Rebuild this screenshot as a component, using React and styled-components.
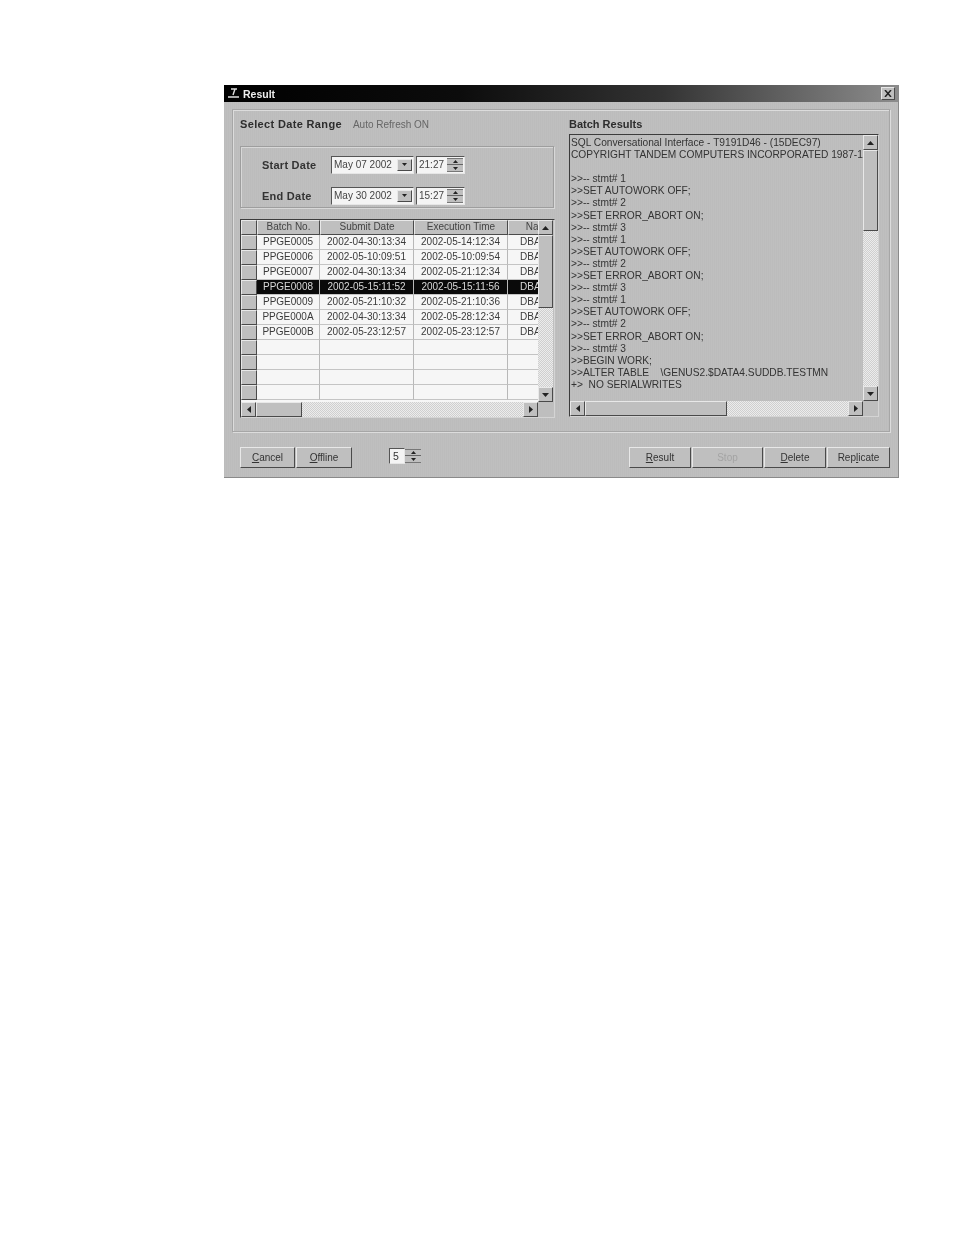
import React from "react";
import styled, { createGlobalStyle, css } from "styled-components";

const Global = createGlobalStyle`
  html, body { margin: 0; padding: 0; background: #fff; }
  body { font-family: "Liberation Sans", Arial, sans-serif; }
`;

const raised = css`
  background: #bfbfbf;
  border: 1px solid;
  border-color: #e8e8e8 #4a4a4a #4a4a4a #e8e8e8;
  box-sizing: border-box;
`;

const sunken = css`
  border: 1px solid;
  border-color: #555 #e6e6e6 #e6e6e6 #555;
  box-sizing: border-box;
`;

const Page = styled.div`
  width: 954px;
  height: 1235px;
  padding: 85px 0 0 224px;
  box-sizing: border-box;
  overflow: hidden;
`;

const Window = styled.div`
  width: 675px;
  height: 393px;
  background: repeating-linear-gradient(90deg, #bcbcbc 0 1px, #bfbfbf 1px 2px);
  border-right: 1px solid #8a8a8a;
  border-bottom: 1px solid #8a8a8a;
  box-sizing: border-box;
  display: flex;
  flex-direction: column;
  filter: blur(0.6px);
  color: #333;
`;

const TitleBar = styled.div`
  height: 17px;
  flex: none;
  background: linear-gradient(90deg, #000 0%, #0c0c0c 35%, #333 65%, #666 85%, #8c8c8c 100%);
  display: flex;
  align-items: center;
  padding: 0 3px 0 2px;
  gap: 1px;
  color: #eee;
  font-weight: 700;
  font-size: 10.5px;
`;

const TitleText = styled.span`
  flex: 1;
`;

const CloseBox = styled.div`
  ${raised}
  width: 14px;
  height: 13px;
  display: flex;
  align-items: center;
  justify-content: center;
`;

const Frame = styled.div`
  margin: 7px 8px 0 8px;
  height: 323px;
  flex: none;
  border: 1px solid #a6a6a6;
  box-shadow: inset 1px 1px 0 #dcdcdc, 1px 1px 0 #dcdcdc;
  box-sizing: border-box;
  padding: 0 11px 0 7px;
  display: grid;
  grid-template-columns: 315px 310px;
  column-gap: 14px;
`;

const Column = styled.div`
  display: flex;
  flex-direction: column;
  min-width: 0;
`;

const HeadRow = styled.div`
  height: 24px;
  flex: none;
  display: flex;
  align-items: flex-end;
  gap: 11px;
  padding-bottom: 3px;
  box-sizing: border-box;
`;

const Heading = styled.span`
  font-weight: 700;
  font-size: 11px;
  letter-spacing: ${(p) => p.$track || 0}px;
  line-height: 13px;
  color: #2d2d2d;
`;

const Note = styled.span`
  font-size: 10px;
  line-height: 13px;
  color: #666;
`;

const DateGroup = styled.div`
  margin-top: 12px;
  width: 314px;
  height: 62px;
  flex: none;
  border: 1px solid #9e9e9e;
  box-shadow: inset 1px 1px 0 #d8d8d8, 1px 1px 0 #d8d8d8;
  box-sizing: border-box;
  padding: 7px 0 0 21px;
  display: flex;
  flex-direction: column;
  gap: 10px;
`;

const DateRow = styled.div`
  display: flex;
  align-items: center;
  height: 21px;
`;

const DateLabel = styled.span`
  width: 69px;
  font-weight: 700;
  font-size: 11px;
  letter-spacing: 0.25px;
  color: #333;
`;

const Field = styled.div`
  ${sunken}
  background: #f4f4f4;
  height: 18px;
  width: ${(p) => p.$w}px;
  margin-right: 2px;
  display: flex;
  align-items: center;
  font-size: 10px;
  color: #444;
  padding-left: 2px;
  position: relative;
`;

const FieldText = styled.span`
  flex: 1;
  white-space: nowrap;
`;

const DropBtn = styled.div`
  ${raised}
  width: 15px;
  height: 12px;
  margin-right: 1px;
  display: flex;
  align-items: center;
  justify-content: center;
`;

const SpinStack = styled.div`
  width: 16px;
  height: 14px;
  margin-right: 1px;
  display: flex;
  flex-direction: column;
  justify-content: space-between;
  align-items: center;
  padding: 1px 0;
  background: #bfbfbf;
  border-top: 1px solid #777;
  border-bottom: 1px solid #777;
  box-sizing: border-box;
  position: relative;
  &::after {
    content: "";
    position: absolute;
    left: 0;
    right: 0;
    top: 5px;
    height: 1px;
    background: #666;
  }
`;

const Arrow = styled.svg`
  display: block;
  fill: #222;
`;

const Up = ({ w = 7, h = 4 }) => (
  <Arrow width={w} height={h} viewBox="0 0 7 4" preserveAspectRatio="none"><path d="M3.5 0 7 4H0z" /></Arrow>
);
const Down = ({ w = 7, h = 4 }) => (
  <Arrow width={w} height={h} viewBox="0 0 7 4" preserveAspectRatio="none"><path d="M0 0h7L3.5 4z" /></Arrow>
);
const Left = () => (
  <Arrow width="4" height="7" viewBox="0 0 4 7"><path d="M4 0v7L0 3.5z" /></Arrow>
);
const Right = () => (
  <Arrow width="4" height="7" viewBox="0 0 4 7"><path d="M0 0l4 3.5L0 7z" /></Arrow>
);

const TableBox = styled.div`
  ${sunken}
  border-color: #3c3c3c #d4d4d4 #d4d4d4 #3c3c3c;
  margin-top: 11px;
  width: 315px;
  height: 199px;
  flex: none;
  display: grid;
  grid-template-columns: 297px 15px;
  grid-template-rows: 182px 15px;
  overflow: hidden;
`;

const TextBox = styled(TableBox)`
  margin-top: 0;
  width: 310px;
  height: 283px;
  grid-template-columns: 293px 15px;
  grid-template-rows: 266px 15px;
`;

const Grid = styled.div`
  overflow: hidden;
  background: #f6f6f6;
`;

const Row = styled.div`
  display: grid;
  grid-template-columns: 16px 63px 94px 94px 62px;
  height: 15px;
`;

const HeadCell = styled.div`
  ${raised}
  font-size: 10px;
  line-height: 12px;
  text-align: center;
  color: #444;
  white-space: nowrap;
  overflow: hidden;
`;

const Cell = styled.div`
  font-size: 10px;
  line-height: 14px;
  text-align: ${(p) => (p.$left ? "left" : "center")};
  padding-left: ${(p) => (p.$left ? "12px" : "0")};
  white-space: nowrap;
  overflow: hidden;
  box-sizing: border-box;
  border-right: 1px solid #b8b8b8;
  border-bottom: 1px solid #c4c4c4;
  background: ${(p) => (p.$sel ? "#0a0a0a" : "#f6f6f6")};
  color: ${(p) => (p.$sel ? "#d8d8d8" : "#3a3a3a")};
`;

const dither = css`
  background-color: #dcdcdc;
  background-image: repeating-conic-gradient(#cfcfcf 0 25%, #ececec 0 50%);
  background-size: 2px 2px;
`;

const VBar = styled.div`
  ${dither}
  display: flex;
  flex-direction: column;
  height: 100%;
`;

const HBar = styled.div`
  ${dither}
  display: flex;
  width: 100%;
`;

const SBtn = styled.div`
  ${raised}
  width: 15px;
  height: 15px;
  flex: none;
  display: flex;
  align-items: center;
  justify-content: center;
`;

const Thumb = styled.div`
  ${raised}
  flex: none;
  width: ${(p) => (p.$horizontal ? `${p.$size}px` : "15px")};
  height: ${(p) => (p.$horizontal ? "15px" : `${p.$size}px`)};
`;

const Fill = styled.div`
  flex: 1;
`;

const Corner = styled.div`
  background: #bebebe;
`;

const ResultText = styled.div`
  overflow: hidden;
  padding: 2px 0 0 1px;
  font-size: 10.2px;
  line-height: 12.1px;
  color: #333;
  white-space: pre;
  min-width: 0;
`;

const Footer = styled.div`
  flex: 1;
  display: flex;
  align-items: flex-start;
  padding: 15px 8px 0 16px;
`;

const BtnGroup = styled.div`
  display: flex;
  gap: 1px;
`;

const Button = styled.div`
  ${raised}
  width: ${(p) => p.$w}px;
  height: 21px;
  font-size: 10px;
  display: flex;
  align-items: center;
  justify-content: center;
  color: ${(p) => (p.$off ? "#a4a4a4" : "#333")};
  u { text-underline-offset: 1px; }
`;

const Counter = styled.div`
  margin: 0 0 0 37px;
  display: flex;
  align-items: center;
  height: 17px;
`;

const CounterField = styled.div`
  ${sunken}
  width: 16px;
  height: 16px;
  background: #f4f4f4;
  font-size: 10.5px;
  line-height: 14px;
  padding-left: 3px;
`;

const Spacer = styled.div`
  flex: 1;
`;

const rows = [
  ["PPGE0005", "2002-04-30:13:34", "2002-05-14:12:34"],
  ["PPGE0006", "2002-05-10:09:51", "2002-05-10:09:54"],
  ["PPGE0007", "2002-04-30:13:34", "2002-05-21:12:34"],
  ["PPGE0008", "2002-05-15:11:52", "2002-05-15:11:56", true],
  ["PPGE0009", "2002-05-21:10:32", "2002-05-21:10:36"],
  ["PPGE000A", "2002-04-30:13:34", "2002-05-28:12:34"],
  ["PPGE000B", "2002-05-23:12:57", "2002-05-23:12:57"],
];

const lines = `SQL Conversational Interface - T9191D46 - (15DEC97)
COPYRIGHT TANDEM COMPUTERS INCORPORATED 1987-1997

>>-- stmt# 1
>>SET AUTOWORK OFF;
>>-- stmt# 2
>>SET ERROR_ABORT ON;
>>-- stmt# 3
>>-- stmt# 1
>>SET AUTOWORK OFF;
>>-- stmt# 2
>>SET ERROR_ABORT ON;
>>-- stmt# 3
>>-- stmt# 1
>>SET AUTOWORK OFF;
>>-- stmt# 2
>>SET ERROR_ABORT ON;
>>-- stmt# 3
>>BEGIN WORK;
>>ALTER TABLE    \\GENUS2.$DATA4.SUDDB.TESTMN
+>  NO SERIALWRITES`;

const Spin = () => (
  <SpinStack>
    <Up w={5} h={3} />
    <Down w={5} h={3} />
  </SpinStack>
);

const DateLine = ({ label, date, time }) => (
  <DateRow>
    <DateLabel>{label}</DateLabel>
    <Field $w={83}>
      <FieldText>{date}</FieldText>
      <DropBtn><Down w={5} h={3} /></DropBtn>
    </Field>
    <Field $w={49}>
      <FieldText>{time}</FieldText>
      <Spin />
    </Field>
  </DateRow>
);

const VScroll = ({ size }) => (
  <VBar>
    <SBtn><Up /></SBtn>
    <Thumb $size={size} />
    <Fill />
    <SBtn><Down /></SBtn>
  </VBar>
);

const HScroll = ({ size }) => (
  <HBar>
    <SBtn><Left /></SBtn>
    <Thumb $horizontal $size={size} />
    <Fill />
    <SBtn><Right /></SBtn>
  </HBar>
);

export default function App() {
  return (
    <Page>
      <Global />
      <Window>
        <TitleBar>
          <svg width="16" height="11" viewBox="0 0 16 11">
            <path d="M5 1h6M9 1 7 7M2 9h11" stroke="#ddd" strokeWidth="1.4" fill="none" />
          </svg>
          <TitleText>Result</TitleText>
          <CloseBox>
            <svg width="8" height="7" viewBox="0 0 8 7">
              <path d="M1 0l6 7M7 0 1 7" stroke="#222" strokeWidth="1.5" />
            </svg>
          </CloseBox>
        </TitleBar>
        <Frame>
          <Column>
            <HeadRow>
              <Heading $track={0.35}>Select Date Range</Heading>
              <Note>Auto Refresh ON</Note>
            </HeadRow>
            <DateGroup>
              <DateLine label="Start Date" date="May 07 2002" time="21:27" />
              <DateLine label="End Date" date="May 30 2002" time="15:27" />
            </DateGroup>
            <TableBox>
              <Grid>
                <Row>
                  <HeadCell />
                  <HeadCell>Batch No.</HeadCell>
                  <HeadCell>Submit Date</HeadCell>
                  <HeadCell>Execution Time</HeadCell>
                  <HeadCell>Name</HeadCell>
                </Row>
                {rows.map(([a, b, c, sel]) => (
                  <Row key={a}>
                    <HeadCell />
                    <Cell $sel={sel}>{a}</Cell>
                    <Cell $sel={sel}>{b}</Cell>
                    <Cell $sel={sel}>{c}</Cell>
                    <Cell $sel={sel} $left>DBA</Cell>
                  </Row>
                ))}
                {[0, 1, 2, 3].map((i) => (
                  <Row key={i}>
                    <HeadCell />
                    <Cell />
                    <Cell />
                    <Cell />
                    <Cell />
                  </Row>
                ))}
              </Grid>
              <VScroll size={73} />
              <HScroll size={46} />
              <Corner />
            </TableBox>
          </Column>
          <Column>
            <HeadRow>
              <Heading>Batch Results</Heading>
            </HeadRow>
            <TextBox>
              <ResultText>{lines}</ResultText>
              <VScroll size={81} />
              <HScroll size={142} />
              <Corner />
            </TextBox>
          </Column>
        </Frame>
        <Footer>
          <BtnGroup>
            <Button $w={55}><span><u>C</u>ancel</span></Button>
            <Button $w={56}><span><u>O</u>ffline</span></Button>
          </BtnGroup>
          <Counter>
            <CounterField>5</CounterField>
            <Spin />
          </Counter>
          <Spacer />
          <BtnGroup>
            <Button $w={62}><span><u>R</u>esult</span></Button>
            <Button $w={71} $off>Stop</Button>
            <Button $w={62}><span><u>D</u>elete</span></Button>
            <Button $w={63}><span>Rep<u>l</u>icate</span></Button>
          </BtnGroup>
        </Footer>
      </Window>
    </Page>
  );
}
